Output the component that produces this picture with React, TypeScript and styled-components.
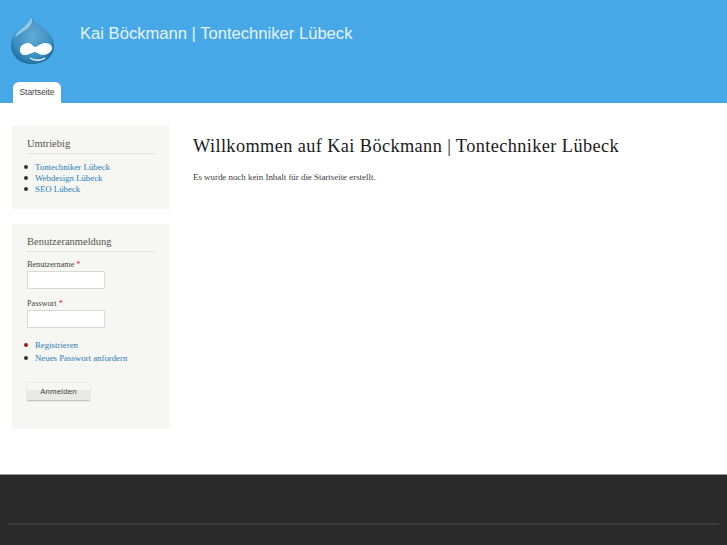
import React from "react";
import styled, { createGlobalStyle } from "styled-components";

const Global = createGlobalStyle`
  html, body { margin: 0; padding: 0; background: #fff; }
  body { font-family: "Liberation Serif", "Times New Roman", serif; color: #3b3b3b; overflow: hidden; }
`;
const Page = styled.div`display:flex;flex-direction:column;width:727px;height:545px;overflow:hidden;`;
const Header = styled.header`height:103px;background:#47a8e7;display:flex;flex-direction:column;flex:none;`;
const Brand = styled.div`height:82px;display:flex;align-items:flex-start;padding:15px 0 0 10px;box-sizing:border-box;`;
const SiteName = styled.div`font-family:"Liberation Sans",Arial,sans-serif;font-size:16.6px;line-height:20px;color:#e8f4fc;margin:9px 0 0 24px;white-space:nowrap;`;
const Tabs = styled.nav`display:flex;padding-left:13px;`;
const Tab = styled.a`width:48px;height:21px;background:#fff;border-radius:6px 6px 0 0;display:flex;align-items:center;justify-content:center;font-family:"Liberation Sans",Arial,sans-serif;font-size:8.5px;letter-spacing:-.1px;color:#444;padding-bottom:2px;box-sizing:border-box;`;
const Body = styled.div`flex:1;display:flex;align-items:flex-start;padding:23px 0 0 12px;`;
const Sidebar = styled.aside`width:158px;display:flex;flex-direction:column;gap:15px;flex:none;`;
const Block = styled.section<{ $h: number }>`height:${p => p.$h}px;box-sizing:border-box;background:#f6f6f2;padding:11px 15px 0;`;
const BlockTitle = styled.h2`margin:0 0 7px;padding-bottom:3px;border-bottom:1px solid #dfdfdb;font-size:10.5px;line-height:13px;font-weight:400;color:#555;white-space:nowrap;`;
const List = styled.ul<{ $gap: number; $top?: number }>`list-style:none;margin:${p => p.$top ?? 0}px 0 0;padding:0;display:flex;flex-direction:column;gap:${p => p.$gap}px;`;
const Item = styled.li<{ $mark?: string }>`display:flex;align-items:center;height:11px;font-size:8.8px;color:#2a80b8;white-space:nowrap;&::before{content:"";width:4px;height:4px;border-radius:50%;background:${p => p.$mark ?? "#333"};margin:0 7px 0 -3px;flex:none;}`;
const Field = styled.div`display:flex;flex-direction:column;margin-bottom:9px;`;
const Label = styled.label`font-size:8.2px;line-height:11px;color:#444;margin-bottom:1px;white-space:nowrap;`;
const Req = styled.span`color:#e11;`;
const Input = styled.div`width:78px;height:18px;box-sizing:border-box;background:#fff;border:1px solid #d8d8d4;`;
const Button = styled.button`display:block;margin-top:20px;width:63px;height:18px;padding:0;border:0;border-bottom:1px solid #c4c4c0;border-radius:1px;box-shadow:0 0 0 .5px #ddd;background:linear-gradient(#f6f6f3 0 40%,#e9e9e5 40%);font-family:"Liberation Sans",Arial,sans-serif;font-size:7.8px;letter-spacing:.2px;color:#444;`;
const Main = styled.main`margin-left:23px;padding-top:8px;`;
const Title = styled.h1`margin:0;font-size:18.3px;line-height:24px;font-weight:400;color:#1a1a1a;white-space:nowrap;letter-spacing:.4px;`;
const Text = styled.p`margin:13px 0 0;font-size:8.9px;line-height:12px;color:#3b3b3b;white-space:nowrap;`;
const Footer = styled.footer`height:71px;flex:none;box-sizing:border-box;background:#292929;border-top:1px solid #999;padding:48px 8px 0;`;
const Rule = styled.div`height:2px;background:#393939;`;

const Logo = () => (
  <svg width="46" height="50" viewBox="0 0 46 50" aria-hidden="true">
    <defs>
      <radialGradient id="d" cx="50%" cy="42%" r="60%">
        <stop offset="0%" stopColor="#62aad4" />
        <stop offset="72%" stopColor="#3c8fc2" />
        <stop offset="100%" stopColor="#1f6a9c" />
      </radialGradient>
    </defs>
    <path d="M21 0C22 6 29 9 35 14C41 19 44 25 44 31C44 42 34 49 22 49C10 49 1 41 1 30C1 20 9 15 14 11C18 8 21 5 21 0Z" fill="url(#d)" />
    <path d="M21 2C20 7 15 11 10 15C7 18 5 20 5 23C9 18 15 16 19 12C22 9 23 5 21 2Z" fill="#a8d4ec" opacity=".8" />
    <path d="M10 35C10 30 15 28 18 28C22 28 23 32 25 32C27 32 31 28 35 28C40 28 42 31 42 33C42 37 37 40 33 40C29 40 27 37 25 37C23 37 19 40 15 40C12 40 10 38 10 35Z" fill="#fff" />
    <path d="M20 43C24 46 31 46 35 43" fill="none" stroke="#eef6fb" strokeWidth="1.3" />
  </svg>
);

export default function App() {
  return (
    <Page>
      <Global />
      <Header>
        <Brand>
          <Logo />
          <SiteName>Kai Böckmann | Tontechniker Lübeck</SiteName>
        </Brand>
        <Tabs><Tab>Startseite</Tab></Tabs>
      </Header>
      <Body>
        <Sidebar>
          <Block $h={83}>
            <BlockTitle>Umtriebig</BlockTitle>
            <List $gap={0}>
              <Item>Tontechniker Lübeck</Item>
              <Item>Webdesign Lübeck</Item>
              <Item>SEO Lübeck</Item>
            </List>
          </Block>
          <Block $h={205}>
            <BlockTitle>Benutzeranmeldung</BlockTitle>
            <Field>
              <Label>Benutzername <Req>*</Req></Label>
              <Input />
            </Field>
            <Field>
              <Label>Passwort <Req>*</Req></Label>
              <Input />
            </Field>
            <List $gap={2} $top={11}>
              <Item $mark="#a8141c">Registrieren</Item>
              <Item>Neues Passwort anfordern</Item>
            </List>
            <Button>Anmelden</Button>
          </Block>
        </Sidebar>
        <Main>
          <Title>Willkommen auf Kai Böckmann | Tontechniker Lübeck</Title>
          <Text>Es wurde noch kein Inhalt für die Startseite erstellt.</Text>
        </Main>
      </Body>
      <Footer><Rule /></Footer>
    </Page>
  );
}
